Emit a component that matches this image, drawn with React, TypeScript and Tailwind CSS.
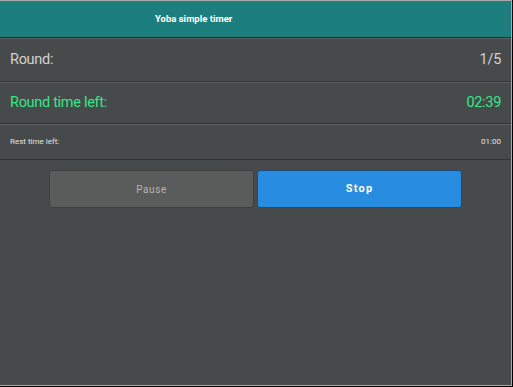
export default function App() {
  return (
    <div
      className="flex h-[387px] w-[513px] flex-col bg-black"
      style={{ fontFamily: 'Roboto, "Noto Sans", sans-serif' }}
    >
      <div className="flex h-[386px] w-[512px] flex-col border-t border-r border-b border-[#a9abab] bg-[#464a4b]">
        <header className="flex h-[36px] items-center bg-[#1d7f7d] pl-[155px] text-[9.5px] font-bold text-white">
          Yoba simple timer
        </header>
        <div className="h-px bg-[#262a2b]" />
        <div className="h-px bg-[#5c6061]" />
        <div className="flex h-[43px] items-center justify-between border-b border-[#2f3334] px-[10px] text-[14.5px] tracking-[-0.3px] text-[#d2d2d2]">
          <span>Round:</span>
          <span>1/5</span>
        </div>
        <div className="flex h-[42px] items-center justify-between border-t border-b border-t-[#5c6061] border-b-[#2f3334] px-[10px] text-[14.5px] tracking-[-0.3px] text-[#33e886]">
          <span>Round time left:</span>
          <span>02:39</span>
        </div>
        <div className="flex h-[36px] items-center justify-between border-t border-b border-t-[#5c6061] border-b-[#2f3334] px-[10px] text-[8px] text-[#e4e4e4]">
          <span>Rest time left:</span>
          <span>01:00</span>
        </div>
        <div className="flex gap-[3px] pt-[10px] pl-[49px]">
          <button className="flex h-[38px] w-[205px] items-center justify-center rounded-[3px] border border-[#3c3e3e] bg-[#5a5c5b] text-[10px] tracking-[0.6px] text-[#b4b4b4]">
            Pause
          </button>
          <button className="flex h-[38px] w-[205px] items-center justify-center rounded-[3px] border border-[#1b4a75] bg-[#288ce0] text-[11px] font-bold tracking-[1.2px] text-white">
            Stop
          </button>
        </div>
      </div>
    </div>
  )
}
